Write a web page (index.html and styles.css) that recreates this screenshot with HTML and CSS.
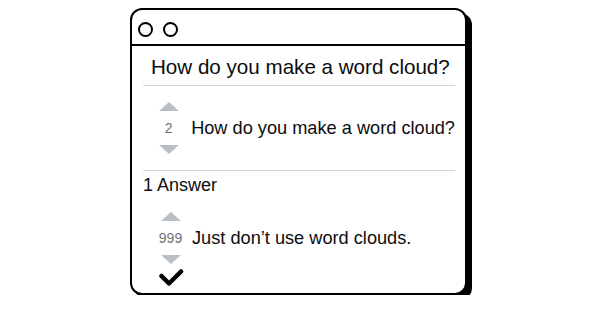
FILE: index.html
```html
<!DOCTYPE html>
<html lang="en">
<head>
    <meta charset="UTF-8">
    <meta name="viewport" content="width=device-width, initial-scale=1.0">
    <title>Word Cloud Question</title>
    <link rel="stylesheet" href="styles.css">
</head>
<body>

    <div class="window">
        <!-- Title bar with the two window buttons -->
        <div class="titlebar">
            <span class="dot"></span>
            <span class="dot"></span>
        </div>

        <div class="content">
            <h1 class="question-title">How do you make a word cloud?</h1>

            <!-- Question -->
            <div class="post question">
                <div class="votes">
                    <span class="arrow up"></span>
                    <span class="count">2</span>
                    <span class="arrow down"></span>
                </div>
                <div class="post-text">How do you make a word cloud?</div>
            </div>

            <div class="answers-header">1 Answer</div>

            <!-- Accepted answer -->
            <div class="post answer">
                <div class="votes">
                    <span class="arrow up"></span>
                    <span class="count">999</span>
                    <span class="arrow down"></span>
                    <svg class="accepted" width="26" height="19" viewBox="0 0 26 19">
                        <polyline points="3.5,8 11,15.5 23,3.5" fill="none" stroke="#000" stroke-width="4.5" stroke-linecap="round" stroke-linejoin="round"/>
                    </svg>
                </div>
                <div class="post-text">Just don’t use word clouds.</div>
            </div>
        </div>
    </div>

</body>
</html>
```

FILE: styles.css
```css
/* Basic Reset */
* {
    margin: 0;
    padding: 0;
    box-sizing: border-box;
}

body {
    font-family: 'Liberation Sans', Arial, sans-serif;
    background-color: #FFFFFF;
    color: #0c0d0e;
}

/* Window frame */
.window {
    width: 337px;
    height: 287px;
    margin: 8px 0 0 130px;
    background-color: #FFFFFF;
    border: 2px solid #000;
    border-radius: 12px;
    box-shadow: 5px 5px 0 #000;
    overflow: hidden;
}

.titlebar {
    height: 36px;
    padding: 4px 0 0 6px;
    display: flex;
    align-items: center;
    gap: 10px;
    border-bottom: 2px solid #000;
}

.dot {
    width: 15px;
    height: 15px;
    border: 2px solid #000;
    border-radius: 50%;
}

/* Content */
.content {
    padding: 0 10px 0 11px;
}

.question-title {
    font-size: 20.6px;
    font-weight: normal;
    line-height: 24px;
    white-space: nowrap;
    padding: 9px 0 6px 8px;
    border-bottom: 1px solid #d4d6d8;
}

.post {
    display: flex;
    align-items: flex-start;
    gap: 2px;
}

.question {
    padding: 16px 0 16px 5px;
    border-bottom: 1px solid #d4d6d8;
}

.answer {
    padding: 16px 0 0 5px;
}

.votes {
    width: 42px;
    display: flex;
    flex-direction: column;
    align-items: center;
}

.arrow {
    width: 0;
    height: 0;
    border-left: 10px solid transparent;
    border-right: 10px solid transparent;
}

.arrow.up {
    border-bottom: 9px solid #babfc4;
}

.arrow.down {
    border-top: 9px solid #babfc4;
}

.count {
    font-size: 14px;
    line-height: 20px;
    margin: 7px 0;
    color: #6a737c;
}

.answer .votes {
    padding-left: 3px;
}

.accepted {
    margin-top: 4px;
}

.post-text {
    font-size: 18.2px;
    line-height: 20px;
    margin-top: 16px;
    white-space: nowrap;
}

.answers-header {
    font-size: 18px;
    line-height: 21px;
    padding-top: 4px;
}
```
